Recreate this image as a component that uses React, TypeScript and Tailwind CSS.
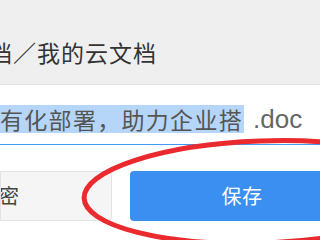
import React from 'react';

const font = { fontFamily: '"Noto Sans CJK SC", "Noto Sans", sans-serif' };

export default function App() {
  return (
    <div className="relative w-[320px] h-[240px] overflow-hidden bg-white" style={font}>
      {/* path header */}
      <div className="h-[85px] bg-[#efefef] border-b border-[#e3e3e3] pt-[38px]">
        <div className="-ml-[11px] whitespace-nowrap text-[23px] leading-[28px] text-[#333] tracking-[1px]">
          档／我的云文档
        </div>
      </div>

      {/* file name input */}
      <div className="pt-[20px] pb-[11px] border-b border-[#3f9cf2] flex items-center whitespace-nowrap">
        <span className="bg-[#b5d6f8] text-[#555] text-[23px] leading-[28px] tracking-[1.3px] pr-[1px]">
          有化部署，助力企业搭
        </span>
        <span className="ml-[9px] text-[#666] text-[26px] leading-[28px]" style={{ fontFamily: '"Liberation Sans", sans-serif' }}>
          .doc
        </span>
      </div>

      {/* actions */}
      <div className="mt-[26px] flex gap-[18px]">
        <div className="w-[112px] h-[50px] shrink-0 bg-[#f5f5f5] border border-[#e2e2e2] rounded-r-[4px] flex items-center overflow-hidden">
          <span className="-ml-[22px] text-[20px] text-[#444] whitespace-nowrap">加密</span>
        </div>
        <button className="w-[224px] h-[50px] shrink-0 bg-[#3a8ff0] rounded-[4px] text-white text-[20px] tracking-[0.5px]">
          保存
        </button>
      </div>

      {/* red annotation */}
      <svg className="absolute inset-0 pointer-events-none" width="320" height="240" viewBox="0 0 320 240">
        <ellipse cx="262" cy="192" rx="178" ry="51" fill="none" stroke="#ea2a2e" strokeWidth="5" transform="rotate(-2 262 192)" />
      </svg>
    </div>
  );
}
